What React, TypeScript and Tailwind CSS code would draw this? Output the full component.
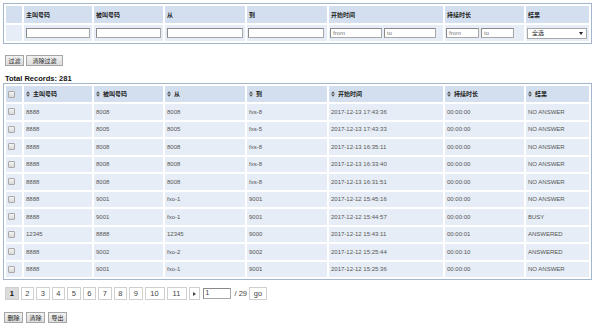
import React from "react";

const rows: string[][] = [
  ["8888", "8008", "8008", "fxs-8", "2017-12-13 17:43:36", "00:00:00", "NO ANSWER"],
  ["8888", "8005", "8005", "fxs-5", "2017-12-13 17:43:33", "00:00:00", "NO ANSWER"],
  ["8888", "8008", "8008", "fxs-8", "2017-12-13 16:35:11", "00:00:00", "NO ANSWER"],
  ["8888", "8008", "8008", "fxs-8", "2017-12-13 16:33:40", "00:00:00", "NO ANSWER"],
  ["8888", "8008", "8008", "fxs-8", "2017-12-13 16:31:51", "00:00:00", "NO ANSWER"],
  ["8888", "9001", "fxo-1", "9001", "2017-12-12 15:45:16", "00:00:00", "NO ANSWER"],
  ["8888", "9001", "fxo-1", "9001", "2017-12-12 15:44:57", "00:00:00", "BUSY"],
  ["12345", "8888", "12345", "9000", "2017-12-12 15:43:11", "00:00:01", "ANSWERED"],
  ["8888", "9002", "fxo-2", "9002", "2017-12-12 15:25:44", "00:00:10", "ANSWERED"],
  ["8888", "9001", "fxo-1", "9001", "2017-12-12 15:25:36", "00:00:00", "NO ANSWER"],
];

const headers = ["主叫号码", "被叫号码", "从", "到", "开始时间", "持续时长", "结果"];

function Cols() {
  return (
    <colgroup>
      <col className="w-[16px]" />
      <col className="w-[68px]" />
      <col className="w-[69px]" />
      <col className="w-[80px]" />
      <col className="w-[80px]" />
      <col className="w-[114px]" />
      <col className="w-[79px]" />
      <col className="w-[63px]" />
    </colgroup>
  );
}

function SortIcon() {
  return (
    <svg width="4" height="6" viewBox="0 0 4 6" className="mr-[3px] shrink-0">
      <path d="M0 2.6 L2 0.2 L4 2.6Z M0 3.4 L2 5.8 L4 3.4Z" fill="#555" />
    </svg>
  );
}

function Checkbox() {
  return (
    <div className="ml-[2px] h-[7px] w-[7px] rounded-[1px] border border-[#a9a9a9] bg-gradient-to-b from-[#f4f4f4] to-[#d9d9d9]" />
  );
}

function TextInput({ w, ph }: { w: string; ph?: string }) {
  return (
    <div
      className={`${w} flex h-[10px] items-center border border-[#a8a8a8] border-t-[#8a8a8a] border-l-[#8a8a8a] bg-white pl-[2px] text-[6px] leading-none text-[#777]`}
    >
      {ph}
    </div>
  );
}

function Btn({ children, w }: { children: React.ReactNode; w: string }) {
  return (
    <div
      className={`${w} flex h-[11px] items-center justify-center border border-[#a6a6a6] bg-gradient-to-b from-[#f2f2f2] to-[#dcdcdc] text-[6px] leading-none text-[#222]`}
    >
      {children}
    </div>
  );
}

function PageBox({ children, w, active }: { children: React.ReactNode; w: string; active?: boolean }) {
  return (
    <div
      className={`${w} flex h-[13px] shrink-0 items-center justify-center border border-[#d0d0d0] text-[7.5px] leading-none ${
        active ? "bg-[#dcdcdc] font-bold text-[#111]" : "bg-white text-[#444]"
      }`}
    >
      {children}
    </div>
  );
}

export default function App() {
  const font = "font-['Liberation_Sans','Noto_Sans_CJK_SC',sans-serif]";
  return (
    <div className={`h-[326px] w-[594px] overflow-hidden bg-white ${font}`}>
      {/* Filter table */}
      <table className="ml-[3px] mt-[3px] w-[589px] table-fixed border-separate border-spacing-[2px] border border-[#a3b6cd]">
        <Cols />
        <tbody>
          <tr className="h-[17px] bg-[#d3dfee]">
            <td className="p-0" />
            {headers.map((h) => (
              <td key={h} className="p-0 pl-[2px] align-middle text-[6px] font-bold leading-none text-[#222]">
                {h}
              </td>
            ))}
          </tr>
          <tr className="h-[16px] bg-[#e6edf6]">
            <td className="p-0" />
            <td className="p-0 px-[2px] align-middle">
              <TextInput w="w-full" />
            </td>
            <td className="p-0 px-[2px] align-middle">
              <TextInput w="w-full" />
            </td>
            <td className="p-0 px-[2px] align-middle">
              <TextInput w="w-full" />
            </td>
            <td className="p-0 px-[1px] pr-[3px] align-middle">
              <TextInput w="w-full" />
            </td>
            <td className="p-0 pl-[1px] align-middle">
              <div className="flex gap-[2px]">
                <TextInput w="w-[52px]" ph="from" />
                <TextInput w="w-[52px]" ph="to" />
              </div>
            </td>
            <td className="p-0 pl-[1px] align-middle">
              <div className="flex gap-[2px]">
                <TextInput w="w-[33px]" ph="from" />
                <TextInput w="w-[33px]" ph="to" />
              </div>
            </td>
            <td className="p-0 pl-[1px] align-middle">
              <div className="flex h-[11px] w-[60px] items-center justify-between border border-[#a8a8a8] bg-white pl-[4px] pr-[3px] text-[6px] leading-none text-[#222]">
                <span>全选</span>
                <svg width="4" height="3" viewBox="0 0 4 3">
                  <path d="M0 0 L4 0 L2 3Z" fill="#222" />
                </svg>
              </div>
            </td>
          </tr>
        </tbody>
      </table>

      {/* Filter buttons */}
      <div className="ml-[5px] mt-[11px] flex gap-[2px]">
        <Btn w="w-[19px]">过滤</Btn>
        <Btn w="w-[37px]">清除过滤</Btn>
      </div>

      <div className="ml-[5px] mt-[8px] text-[7.5px] font-bold leading-[9px] text-[#111]">Total Records: 281</div>

      {/* Data table */}
      <table className="ml-[3px] w-[589px] table-fixed border-separate border-spacing-[2px] border border-[#a3b6cd]">
        <Cols />
        <thead>
          <tr className="h-[16px] bg-[#d3dfee]">
            <th className="p-0 align-middle">
              <Checkbox />
            </th>
            {headers.map((h) => (
              <th key={h} className="p-0 pl-[2px] text-left align-middle">
                <div className="flex items-center text-[6px] font-bold leading-none text-[#222]">
                  <SortIcon />
                  <span>{h}</span>
                </div>
              </th>
            ))}
          </tr>
        </thead>
        <tbody>
          {rows.map((r, i) => (
            <tr key={i} className="h-[15.5px] bg-[#e6edf6]">
              <td className="p-0 align-middle">
                <Checkbox />
              </td>
              {r.map((c, j) => (
                <td key={j} className="p-0 pl-[2px] align-middle text-[6px] leading-none text-[#555]">
                  {c}
                </td>
              ))}
            </tr>
          ))}
        </tbody>
      </table>

      {/* Pagination */}
      <div className="ml-[5px] mt-[7px] flex items-center gap-[2px]">
        <PageBox w="w-[13.5px]" active>
          1
        </PageBox>
        <PageBox w="w-[13.5px]">2</PageBox>
        <PageBox w="w-[13.5px]">3</PageBox>
        <PageBox w="w-[13.5px]">4</PageBox>
        <PageBox w="w-[13.5px]">5</PageBox>
        <PageBox w="w-[13.5px]">6</PageBox>
        <PageBox w="w-[13.5px]">7</PageBox>
        <PageBox w="w-[13.5px]">8</PageBox>
        <PageBox w="w-[13.5px]">9</PageBox>
        <PageBox w="w-[20px]">10</PageBox>
        <PageBox w="w-[20px]">11</PageBox>
        <PageBox w="w-[11px]">
          <svg width="3" height="4" viewBox="0 0 3 4">
            <path d="M0 0 L3 2 L0 4Z" fill="#444" />
          </svg>
        </PageBox>
        <div className="ml-[1px] flex h-[11px] w-[28px] items-center border border-[#a8a8a8] border-t-[#8a8a8a] border-l-[#8a8a8a] bg-white pl-[2px] text-[6.5px] leading-none text-[#333]">
          1
        </div>
        <span className="ml-[2px] text-[7.5px] leading-none text-[#444]">/ 29</span>
        <PageBox w="w-[18px]">go</PageBox>
      </div>

      {/* Bottom buttons */}
      <div className="ml-[4px] mt-[12px] flex gap-[3px]">
        <Btn w="w-[19px]">删除</Btn>
        <Btn w="w-[19px]">清除</Btn>
        <Btn w="w-[19px]">导出</Btn>
      </div>
    </div>
  );
}
